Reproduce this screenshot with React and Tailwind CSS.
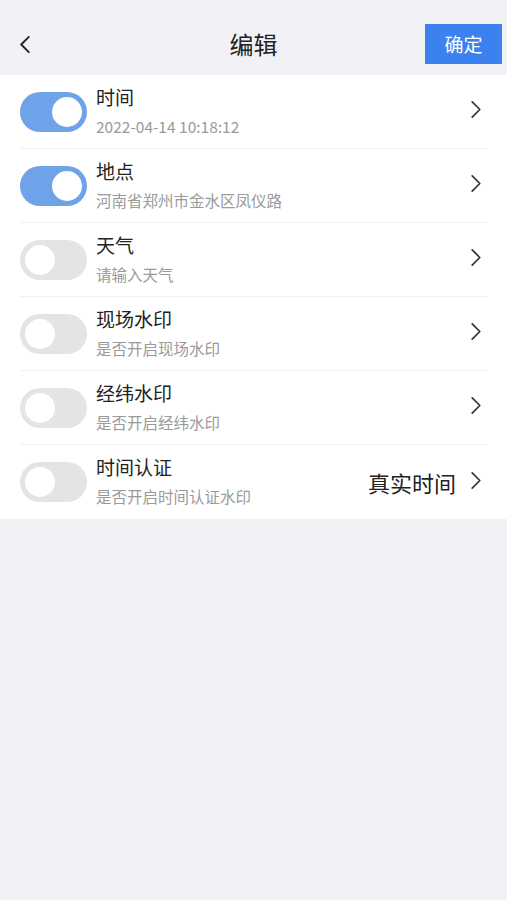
import React from "react";

const rows = [
  { title: "时间", sub: "2022-04-14 10:18:12", on: true },
  { title: "地点", sub: "河南省郑州市金水区凤仪路", on: true },
  { title: "天气", sub: "请输入天气", on: false },
  { title: "现场水印", sub: "是否开启现场水印", on: false },
  { title: "经纬水印", sub: "是否开启经纬水印", on: false },
  { title: "时间认证", sub: "是否开启时间认证水印", on: false, value: "真实时间", last: true },
];

function Chevron({ className }) {
  return (
    <svg viewBox="0 0 12 20" className={className} fill="none" stroke="currentColor" strokeWidth="1.8" strokeLinecap="round" strokeLinejoin="round">
      <path d="M2 2 L10 10 L2 18" />
    </svg>
  );
}

function Toggle({ on }) {
  return (
    <div className={`w-[67px] h-[40px] rounded-full flex items-center px-[5px] shrink-0 ${on ? "bg-[#6ea3ea] justify-end" : "bg-[#e4e4e4] justify-start"}`}>
      <div className="w-[30px] h-[30px] rounded-full bg-white" />
    </div>
  );
}

export default function App() {
  return (
    <div className="w-[507px] h-[900px] bg-[#f2f2f6] font-['Noto_Sans_CJK_SC',sans-serif]">
      <div className="h-[75px] flex items-center justify-between pt-[13px] pl-[19px] pr-[5px] relative">
        <svg viewBox="0 0 12 20" className="w-[12px] h-[19px] text-[#222]" fill="none" stroke="currentColor" strokeWidth="2" strokeLinecap="round" strokeLinejoin="round">
          <path d="M10 2 L2 10 L10 18" />
        </svg>
        <div className="absolute left-0 right-0 top-[26px] text-center text-[24px] leading-[36px] text-[#222] pointer-events-none">编辑</div>
        <div className="w-[77px] h-[40px] bg-[#3b82f0] text-white text-[19px] flex items-center justify-center">确定</div>
      </div>
      <div className="bg-white">
        {rows.map((r, i) => (
          <div key={i} className="pl-[20px] pr-[19px]">
            <div className={`h-[74px] flex items-center ${r.last ? "" : "border-b border-[#f0f0f0]"}`}>
              <Toggle on={r.on} />
              <div className="ml-[9px] flex-1 flex flex-col mb-[3px]">
                <div className="text-[19px] leading-[24px] text-[#222]">{r.title}</div>
                <div className="mt-[7px] text-[15.5px] leading-[20px] text-[#9a9a9a]">{r.sub}</div>
              </div>
              {r.value && <div className="text-[22px] text-[#222] mr-[14px]">{r.value}</div>}
              <Chevron className="w-[12px] h-[19px] text-[#333] mr-[6px] mb-[4px]" />
            </div>
          </div>
        ))}
      </div>
    </div>
  );
}
